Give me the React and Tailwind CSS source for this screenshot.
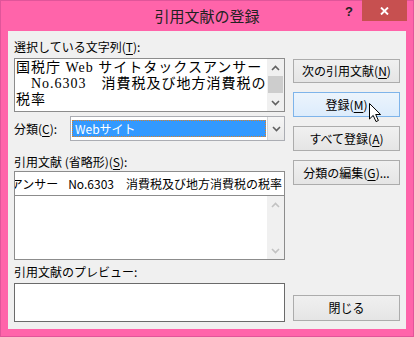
import React from "react";

const UI = "font-['Noto_Sans_CJK_JP',sans-serif]";

function Chevron({ up, color = "#606060" }) {
  return (
    <svg width="9" height="6" viewBox="0 0 9 6">
      {up ? (
        <polyline points="1,5 4.5,1.5 8,5" fill="none" stroke={color} strokeWidth="1.6" />
      ) : (
        <polyline points="1,1 4.5,4.5 8,1" fill="none" stroke={color} strokeWidth="1.6" />
      )}
    </svg>
  );
}

function Btn({ children, hover, className = "" }) {
  return (
    <div
      className={
        "w-[107px] flex items-center justify-center text-[12px] leading-[16px] text-black border " +
        (hover
          ? "border-[#7eb4ea] bg-gradient-to-b from-[#ecf4fc] to-[#dcecfc] "
          : "border-[#acacac] bg-gradient-to-b from-[#f0f0f0] to-[#e5e5e5] ") +
        className
      }
    >
      {children}
    </div>
  );
}

function U({ children }) {
  return <span className="underline underline-offset-2">{children}</span>;
}

export default function App() {
  return (
    <div
      className={
        "relative w-[414px] h-[337px] bg-[#ff64aa] flex flex-col shadow-[inset_0_0_0_1px_#e0559a] " + UI
      }
    >
      {/* title bar */}
      <div className="h-[31px] flex items-start justify-center pt-[5px]">
        <span className="text-[15px] leading-[22px] text-[#222]">引用文献の登録</span>
      </div>
      <div className="absolute left-[345px] top-[3px] text-[13px] font-bold leading-[18px] text-[#222] font-['Liberation_Sans',sans-serif]">
        ?
      </div>
      <div className="absolute left-[362px] top-0 w-[45px] h-[21px] bg-[#c75050] flex items-center justify-center">
        <svg width="9" height="8" viewBox="0 0 9 8">
          <path d="M1,0.5 L8,7.5 M8,0.5 L1,7.5" stroke="#fff" strokeWidth="1.9" />
        </svg>
      </div>

      {/* client */}
      <div className="ml-[8px] w-[398px] h-[298px] bg-[#f0f0f0] flex text-[12px] text-black">
        {/* left column */}
        <div className="ml-[6px] w-[271px] flex flex-col">
          <div className="mt-[8px] h-[16px] leading-[16px]">
            選択している文字列(<U>T</U>):
          </div>
          <div className="mt-[3px] h-[54px] border border-[#8c8c8c] bg-white flex">
            <div className="flex-1 pl-[1px] pt-[1px] text-[14px] leading-[16px] tracking-[1px] whitespace-pre font-['Liberation_Serif','Noto_Sans_CJK_JP',serif]">
              <div>国税庁 Web サイトタックスアンサー</div>
              <div>　No.6303　消費税及び地方消費税の</div>
              <div>税率</div>
            </div>
            <div className="w-[17px] bg-[#f0f0f0] flex flex-col items-center">
              <div className="h-[17px] flex items-center justify-center">
                <Chevron up />
              </div>
              <div className="w-[15px] h-[17px] bg-[#cdcdcd]" />
              <div className="flex-1" />
              <div className="h-[17px] flex items-center justify-center">
                <Chevron />
              </div>
            </div>
          </div>

          <div className="mt-[4px] h-[25px] flex items-center">
            <div className="w-[56px] leading-[16px]">
              分類(<U>C</U>):
            </div>
            <div className="w-[215px] h-[25px] border border-[#abadb3] bg-white flex">
              <div className="flex-1 pl-[1px] py-[3px] pr-[1px]">
                <div className="h-full bg-[#3399ff] border border-dotted border-[#d9822b] text-white leading-[15px] pl-[2px]">
                  Webサイト
                </div>
              </div>
              <div className="w-[17px] border-l border-[#d5d5d5] bg-gradient-to-b from-[#f6f6f6] to-[#e8e8e8] flex items-center justify-center">
                <Chevron />
              </div>
            </div>
          </div>

          <div className="mt-[13px] h-[16px] leading-[16px]">
            引用文献 (省略形)(<U>S</U>):
          </div>
          <div className="mt-[1px] h-[25px] border border-[#8c8c8c] bg-white flex items-center justify-end overflow-hidden pr-[2px]">
            <span className="whitespace-pre leading-[16px] flex shrink-0">
              <span>国税庁 Web サイトタックスアンサー</span>
              <span className="inline-block w-[10px]" />
              <span>No.6303</span>
              <span className="inline-block w-[12px]" />
              <span>消費税及び地方消費税の税率</span>
            </span>
          </div>
          <div className="h-[64px] border border-t-0 border-[#8c8c8c] bg-white flex">
            <div className="flex-1" />
            <div className="w-[17px] bg-[#f0f0f0] flex flex-col items-center">
              <div className="h-[17px] flex items-center justify-center">
                <Chevron up color="#c2c2c2" />
              </div>
              <div className="flex-1" />
              <div className="h-[17px] flex items-center justify-center">
                <Chevron color="#c2c2c2" />
              </div>
            </div>
          </div>

          <div className="mt-[4px] h-[16px] leading-[16px]">引用文献のプレビュー:</div>
          <div className="mt-[3px] h-[39px] border border-[#6a6a6a] bg-white" />
        </div>

        {/* right column */}
        <div className="ml-[8px] w-[107px] flex flex-col">
          <Btn className="mt-[28px] h-[24px]">
            次の引用文献(<U>N</U>)
          </Btn>
          <Btn hover className="mt-[9px] h-[25px]">
            登録(<U>M</U>)
          </Btn>
          <Btn className="mt-[9px] h-[25px]">
            すべて登録(<U>A</U>)
          </Btn>
          <Btn className="mt-[9px] h-[25px]">
            分類の編集(<U>G</U>)...
          </Btn>
          <div className="flex-1" />
          <Btn className="mb-[8px] h-[26px]">閉じる</Btn>
        </div>
      </div>

      {/* mouse cursor */}
      <svg
        className="absolute left-[369px] top-[103px]"
        width="13"
        height="20"
        viewBox="0 0 13 20"
      >
        <path
          d="M0.5,0.5 L0.5,16 L4.2,12.4 L7,18.6 L9.4,17.5 L6.7,11.5 L11.6,11.5 Z"
          fill="#fff"
          stroke="#000"
          strokeWidth="1"
          strokeLinejoin="miter"
        />
      </svg>
    </div>
  );
}
